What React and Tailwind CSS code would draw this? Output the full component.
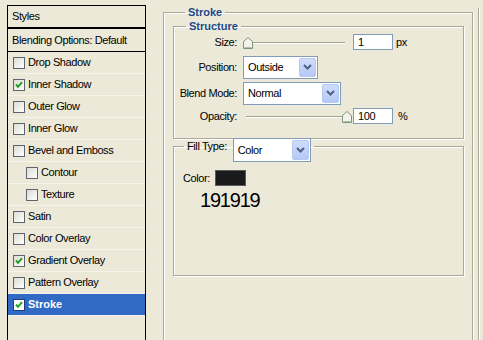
import React from 'react';

const rows = [
  { label: 'Drop Shadow' },
  { label: 'Inner Shadow', checked: true },
  { label: 'Outer Glow' },
  { label: 'Inner Glow' },
  { label: 'Bevel and Emboss' },
  { label: 'Contour', indent: true },
  { label: 'Texture', indent: true },
  { label: 'Satin' },
  { label: 'Color Overlay' },
  { label: 'Gradient Overlay', checked: true },
  { label: 'Pattern Overlay' },
  { label: 'Stroke', checked: true, active: true },
];

function Checkbox({ checked, active }) {
  return (
    <span className={`flex h-[12px] w-[12px] shrink-0 items-center justify-center border ${active ? 'border-[#1c3f7a] bg-white' : 'border-[#5c6470] bg-gradient-to-br from-[#dcdcd4] to-white'}`}>
      {checked && (
        <svg width="10" height="10" viewBox="0 0 10 10">
          <path d="M2 4.5 L4 6.8 L8 2.2" fill="none" stroke="#21a121" strokeWidth="2" />
        </svg>
      )}
    </span>
  );
}

function Chevron() {
  return (
    <svg width="9" height="6" viewBox="0 0 9 6">
      <path d="M1 1 L4.5 4.5 L8 1" fill="none" stroke="#4d6185" strokeWidth="2" />
    </svg>
  );
}

function Select({ value, className }) {
  return (
    <div className={`flex shrink-0 items-stretch border border-[#7f9db9] bg-white p-px ${className}`}>
      <span className="flex-1 pl-[3px] self-center">{value}</span>
      <span className="flex w-[17px] items-center justify-center rounded-[2px] border border-[#b6c8f2] bg-gradient-to-b from-[#d0ddfb] to-[#b4c8f6]">
        <Chevron />
      </span>
    </div>
  );
}

function Thumb() {
  return (
    <svg width="10" height="12" viewBox="0 0 10 12">
      <path d="M0.5 4.5 L5 0.5 L9.5 4.5 V11.5 H0.5 Z" fill="#f3f3ec" stroke="#7d947d" />
      <path d="M1.5 10.5 H8.5" stroke="#a9c2a2" />
    </svg>
  );
}

function Slider({ right }) {
  return (
    <div className="relative h-[16px] w-[109px] shrink-0">
      <div className={`absolute top-[8px] h-[2px] border-t border-b border-t-[#a3a296] border-b-white ${right ? 'left-[3px] right-[9px]' : 'left-[8px] right-[7px]'}`} />
      <div className={`absolute top-[3px] ${right ? 'right-0' : 'left-0'}`}>
        <Thumb />
      </div>
    </div>
  );
}

function Field({ value }) {
  return (
    <div className="h-[16px] w-[40px] shrink-0 border border-[#7f9db9] bg-white pl-[4px] leading-[14px]">{value}</div>
  );
}

const etched = 'border border-[#a9a89a] shadow-[inset_1px_1px_0_#fff,1px_1px_0_#fff]';

export default function App() {
  return (
    <div className="flex h-[340px] w-[483px] items-start overflow-hidden bg-[#ece9d8] font-['Liberation_Sans',Arial,sans-serif] text-[11px] tracking-[-0.4px] text-black">
      <aside className="ml-[7px] mt-[5px] flex h-[360px] w-[139px] shrink-0 flex-col border border-black">
        <div className="flex h-[23px] shrink-0 items-center border-b-2 border-black pl-[4px]">Styles</div>
        <div className="flex h-[23px] shrink-0 items-center border-b border-black pl-[4px]">Blending Options: Default</div>
        {rows.map((r) => (
          <div key={r.label}
            className={`flex h-[22px] shrink-0 items-center gap-[3px] border-b border-[#f6f4ec] ${r.indent ? 'pl-[18px]' : 'pl-[5px]'} ${r.active ? 'bg-[#316ac5] font-bold text-white tracking-normal' : ''}`}>
            <Checkbox checked={r.checked} active={r.active} />
            <span>{r.label}</span>
          </div>
        ))}
      </aside>

      <fieldset className={`ml-[17px] mt-[5px] h-[360px] w-[310px] shrink-0 pl-[9px] pr-[8px] ${etched}`}>
        <legend className="ml-[12px] px-[3px] pt-px font-bold leading-[13px] tracking-normal text-[#1d4a8c]">Stroke</legend>

        <fieldset className={`pb-[14px] ${etched}`}>
          <legend className="ml-[12px] px-[3px] pt-px font-bold leading-[13px] tracking-normal text-[#1d4a8c]">Structure</legend>
          <div className="grid grid-cols-[63px_1fr] items-center gap-x-[6px]">
            <span className="mt-[1px] text-right">Size:</span>
            <div className="mt-[1px] flex h-[16px] items-center">
              <Slider />
              <span className="ml-[1px]"><Field value="1" /></span>
              <span className="ml-[3px]">px</span>
            </div>

            <span className="mt-[5px] text-right">Position:</span>
            <div className="mt-[5px] flex">
              <Select value="Outside" className="h-[23px] w-[75px]" />
            </div>

            <span className="mt-[3px] text-right">Blend Mode:</span>
            <div className="mt-[3px] flex">
              <Select value="Normal" className="h-[23px] w-[98px]" />
            </div>

            <span className="mt-[3px] text-right">Opacity:</span>
            <div className="mt-[3px] flex h-[16px] items-center">
              <Slider right />
              <span className="ml-[1px]"><Field value="100" /></span>
              <span className="ml-[5px]">%</span>
            </div>
          </div>
        </fieldset>

        <fieldset className={`h-[137px] ${etched}`}>
          <legend className="ml-[10px] flex h-[14px] items-start gap-[6px] px-[3px]">
            <span className="mt-[1px] leading-[13px]">Fill Type:</span>
            <Select value="Color" className="-mt-[1px] h-[24px] w-[78px]" />
          </legend>
          <div className="ml-[9px] mt-[17px] flex h-[16px] items-center gap-[5px]">
            <span>Color:</span>
            <span className="h-[16px] w-[31px] border border-[#5a5a5a] bg-[#1a1a1a]" />
          </div>
          <div className="ml-[26px] mt-[4px] text-[20px] leading-[20px] tracking-[-1.2px]">191919</div>
        </fieldset>
      </fieldset>

      <div className="ml-[5px] mt-[8px] h-[340px] w-px shrink-0 bg-[#a9a89a] shadow-[1px_0_0_#fff]" />
    </div>
  );
}
